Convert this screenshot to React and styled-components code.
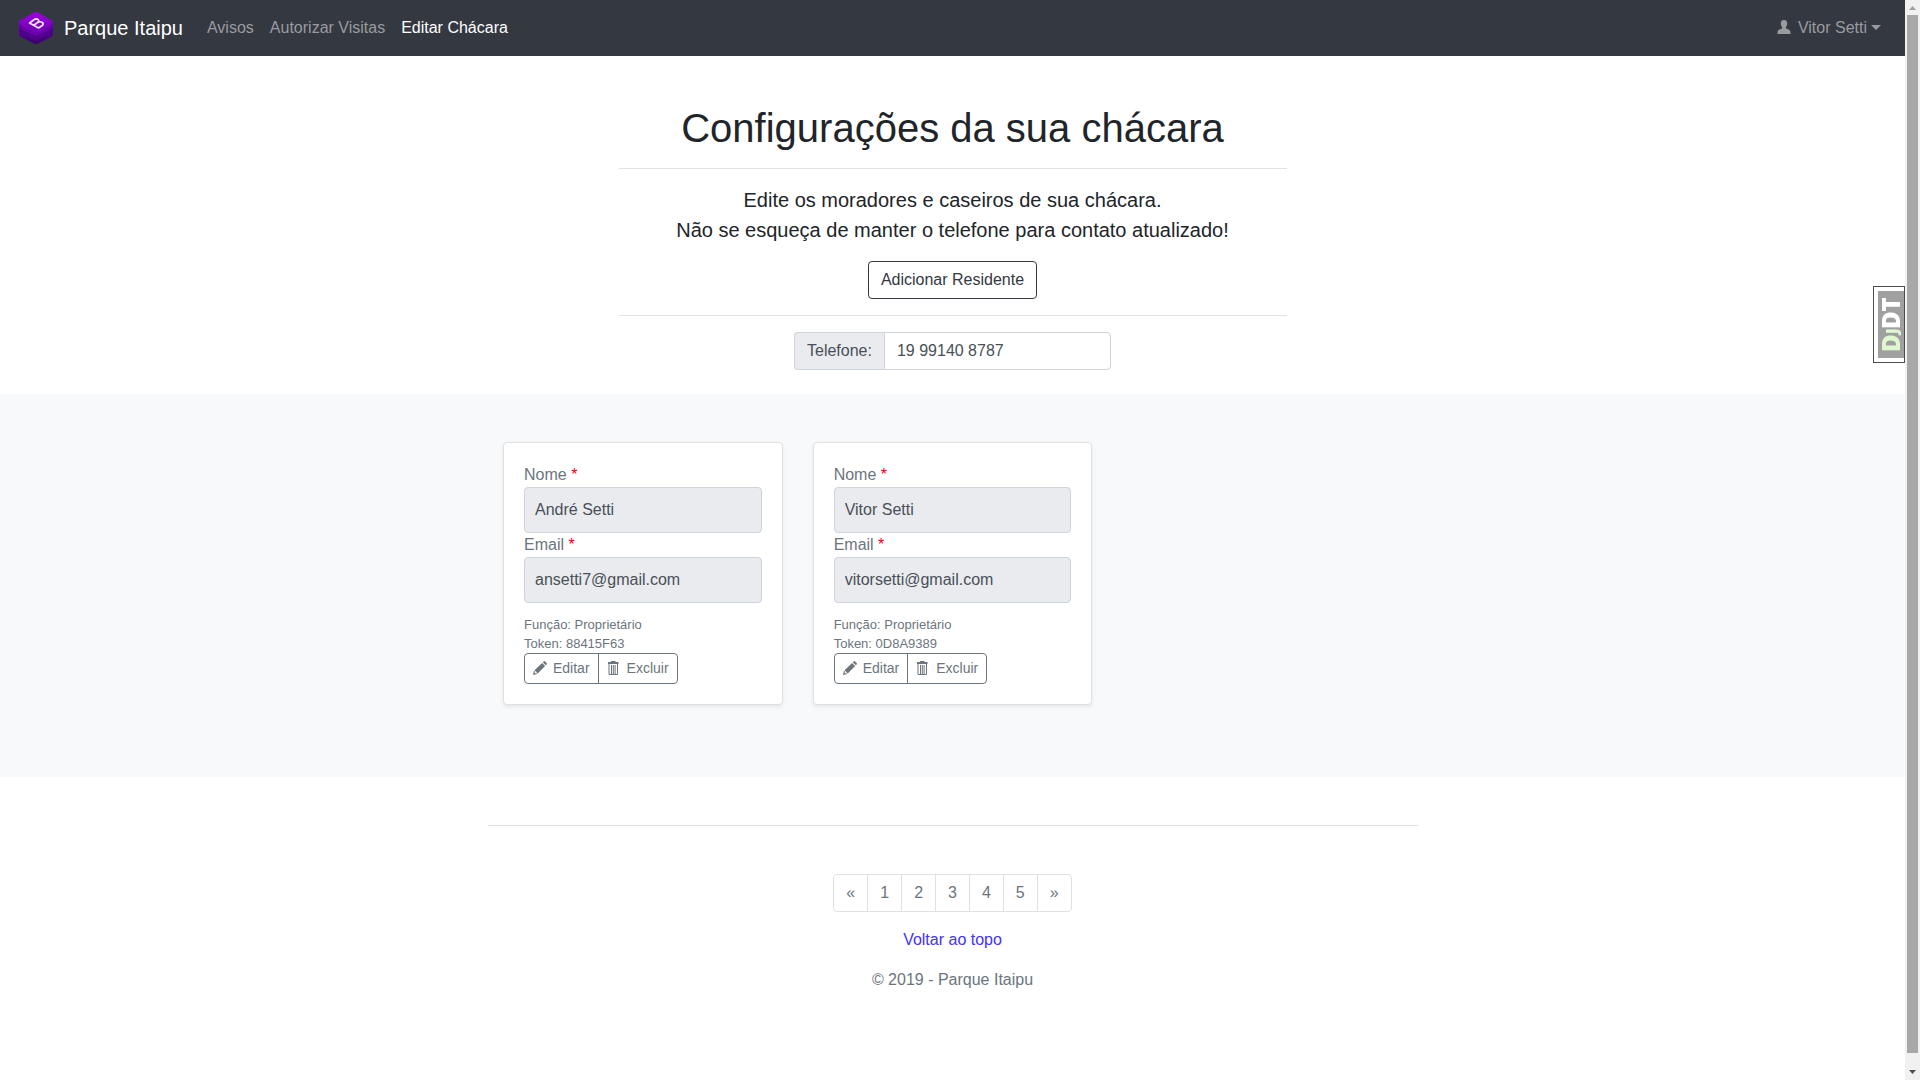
import React from "react";
import styled, { createGlobalStyle } from "styled-components";

const GlobalStyle = createGlobalStyle`
  *, *::before, *::after { box-sizing: border-box; }
  body {
    margin: 0;
    background: #fff;
    color: #212529;
    font-family: "Liberation Sans", Arial, sans-serif;
    font-size: 16px;
    line-height: 24px;
  }
  button, input { font: inherit; }
  p, h1, ul { margin: 0; padding: 0; }
  a { text-decoration: none; }
`;

const Shell = styled.div`
  display: flex;
  min-height: 100vh;
`;

const Page = styled.div`
  flex: 1;
  min-width: 0;
`;

const Navbar = styled.nav`
  display: flex;
  align-items: center;
  height: 56px;
  padding: 0 16px;
  background: #343841;
`;

const Brand = styled.a`
  display: flex;
  align-items: center;
  gap: 10px;
  margin-right: 16px;
  padding-left: 2px;
  color: #fff;
  font-size: 20px;
  line-height: 30px;
`;

const NavLink = styled.a`
  display: flex;
  align-items: center;
  padding: 8px;
  color: ${(p) => (p.$active ? "#fff" : "#999b9f")};
`;

const UserButton = styled.button`
  display: flex;
  align-items: center;
  margin-left: auto;
  padding: 8px;
  border: 0;
  background: none;
  color: #999b9f;
  line-height: 24px;
`;

const UserName = styled.span`
  margin: 0 4px 0 7px;
`;

const Caret = styled.span`
  margin-bottom: 2px;
  border-top: 5px solid currentColor;
  border-left: 5px solid transparent;
  border-right: 5px solid transparent;
`;

const Intro = styled.section`
  display: flex;
  flex-direction: column;
  align-items: center;
  max-width: 668px;
  margin: 0 auto;
  padding: 48px 0 24px;
  text-align: center;
`;

const Title = styled.h1`
  font-size: 40px;
  font-weight: 400;
  line-height: 48px;
`;

const Divider = styled.hr`
  width: 100%;
  margin: ${(p) => (p.$flush ? "0" : "16px 0")};
  border: 0;
  border-top: 1px solid #e1e2e3;
`;

const Lead = styled.p`
  margin-bottom: 16px;
  font-size: 20px;
  line-height: 30px;
`;

const AddButton = styled.button`
  padding: 6px 12px;
  border: 1px solid #343841;
  border-radius: 4px;
  background: #fff;
  color: #343841;
  line-height: 24px;
`;

const PhoneGroup = styled.div`
  display: flex;
  width: 317px;
`;

const PhoneLabel = styled.label`
  padding: 6px 12px;
  border: 1px solid #ced4da;
  border-right: 0;
  border-radius: 4px 0 0 4px;
  background: #e9ebef;
  color: #495057;
`;

const PhoneInput = styled.input`
  flex: 1;
  min-width: 0;
  height: 38px;
  padding: 6px 12px;
  border: 1px solid #ced4da;
  border-radius: 0 4px 4px 0;
  background: #fff;
  color: #495057;
`;

const Album = styled.main`
  padding: 48px 0 72px;
  background: #f8f9fb;
`;

const CardGrid = styled.div`
  display: grid;
  grid-template-columns: repeat(3, 1fr);
  gap: 30px;
  max-width: 899px;
  margin: 0 auto;
`;

const Card = styled.form`
  padding: 20px;
  border: 1px solid #dfe0e2;
  border-radius: 4px;
  background: #fff;
  box-shadow: 0 2px 4px rgba(0, 0, 0, 0.075);
  color: #6c757d;
`;

const FieldLabel = styled.label`
  display: block;
`;

const Required = styled.span`
  color: #e60012;
`;

const FieldInput = styled.input`
  display: block;
  width: 100%;
  height: 46px;
  padding: 0 10px;
  border: 1px solid #ced4da;
  border-radius: 4px;
  background: #e9ebef;
  color: #495057;
`;

const Details = styled.div`
  margin-top: 12px;
  font-size: 13px;
  line-height: 19px;
`;

const ButtonGroup = styled.div`
  display: inline-flex;
  border: 1px solid #6c757d;
  border-radius: 4px;
`;

const ActionButton = styled.button`
  display: flex;
  align-items: center;
  gap: 6px;
  height: 29px;
  padding: 0 8px 2px;
  border: 0;
  background: none;
  color: #6c757d;
  font-size: 14px;

  & + & {
    border-left: 1px solid #6c757d;
  }
`;

const Footer = styled.footer`
  display: flex;
  flex-direction: column;
  align-items: center;
  max-width: 930px;
  margin: 0 auto;
  padding: 48px 0;
  color: #6c757d;
`;

const Pagination = styled.ul`
  display: flex;
  margin: 48px 0 16px;
  border: 1px solid #dee2e6;
  border-radius: 4px;
  list-style: none;
`;

const PageItem = styled.li`
  & + & {
    border-left: 1px solid #dee2e6;
  }
`;

const PageLink = styled.a`
  display: block;
  padding: 6px 12px;
  color: #6c757d;
`;

const TopLink = styled.a`
  margin-bottom: 16px;
  color: #4232ff;
`;

const ScrollTrack = styled.div`
  position: sticky;
  top: 0;
  display: flex;
  flex-direction: column;
  align-items: center;
  width: 15px;
  height: 100vh;
  background: #f1f1f1;
`;

const ScrollArrow = styled.svg`
  width: 15px;
  height: 15px;
  flex: none;
`;

const ScrollThumb = styled.div`
  width: 11px;
  flex: 1;
  margin-bottom: 12px;
  background: #a8a8a8;
`;

const DebugHandle = styled.button`
  position: fixed;
  top: 286px;
  right: 15px;
  width: 32px;
  height: 77px;
  padding: 4px 0 4px 4px;
  border: 1px solid #4d4d4d;
  background: #fff;
`;

const DebugLabel = styled.span`
  display: flex;
  align-items: center;
  justify-content: center;
  height: 100%;
  background: #a0a0a0;
  color: #fff;
  font-family: "Open Sans", sans-serif;
  font-size: 24px;
  font-weight: 800;
  line-height: 26px;
  writing-mode: vertical-rl;
  transform: rotate(180deg);
`;

const DebugAccent = styled.span`
  color: #e0f8d0;
  font-size: ${(p) => (p.$small ? "16px" : "24px")};
`;

const Logo = () => (
  <svg width="36" height="36" viewBox="0 0 36 36" aria-hidden="true">
    <defs>
      <linearGradient id="top" x1="0" y1="0" x2="0" y2="1">
        <stop offset="0" stopColor="#9b00e0" />
        <stop offset="1" stopColor="#6f00b4" />
      </linearGradient>
      <linearGradient id="side" x1="0" y1="0" x2="0" y2="1">
        <stop offset="0" stopColor="#6d00b0" />
        <stop offset="1" stopColor="#36006a" />
      </linearGradient>
    </defs>
    <path d="M1 14v10q0 2 2 3l12 6q3 2 6 0l12-6q2-1 2-3V14z" fill="url(#side)" />
    <path d="M1 18v2q0 2 2 3l12 6q3 2 6 0l12-6q2-1 2-3v-2l-17 9z" fill="#51008e" />
    <path d="M1 12v4q0 2 2 3l12 6q3 2 6 0l12-6q2-1 2-3v-4z" fill="#6900aa" />
    <path d="M2.500 10 15 3q3-2 6 0l12 7q4 2 0 5l-12 7q-3 2-6 0L3 15q-4-3-.5-5z" fill="url(#top)" />
    <path d="M11.500 13 16 9.800q2.200-1.600 4-.3 1.700 1.300-.4 3 2.700-1.500 4.700 0 1.900 1.500-.4 3.200L20.500 18zM15.800 15.200l3.800-2.700" fill="none" stroke="#f4e6ff" strokeWidth="1.700" strokeLinejoin="round" />
  </svg>
);

const PersonIcon = () => (
  <svg width="14" height="16" viewBox="0 1 14 16" fill="currentColor" aria-hidden="true">
    <path d="M7 1C4.600 1 3.800 2.500 3.800 4.500c0 1.600.5 2.800 1.300 3.600v1.200C4.500 10 1 10.500.6 12.500L.4 15h13.200l-.2-2.500C13 10.500 9.500 10 8.900 9.300V8.100c.8-.8 1.300-2 1.300-3.600C10.200 2.500 9.400 1 7 1z" />
  </svg>
);

const PencilIcon = () => (
  <svg width="14" height="14" viewBox="0 0 14 14" fill="currentColor" aria-hidden="true">
    <path d="M9.800 1.200 12.800 4.200 13.800 3.200Q14.200 2.700 13.800 2.200L11.800.2Q11.300-.2 10.800.2zM9.100 1.900 1.500 9.200 4.800 12.500 12.100 4.900zM.9 9.800 0 14 4.200 13.100 3.200 12 2 12.400 1.600 12 2 10.800z" />
  </svg>
);

const TrashIcon = () => (
  <svg width="14" height="14" viewBox="1 0 14 14" fill="none" stroke="currentColor" aria-hidden="true">
    <path d="M2 2.500h10.500M2 1.500h10.500M5 .5h4.500M3 3v10.500h8.500V3M5.500 4v9M7.300 4v9M9.100 4v9" />
  </svg>
);

const residents = [
  { id: "88415F63", name: "André Setti", email: "ansetti7@gmail.com", role: "Proprietário" },
  { id: "0D8A9389", name: "Vitor Setti", email: "vitorsetti@gmail.com", role: "Proprietário" },
];

const pages = ["«", "1", "2", "3", "4", "5", "»"];

function ResidentCard({ resident }) {
  const nameId = `name-${resident.id}`;
  const emailId = `email-${resident.id}`;
  return (
    <Card>
      <FieldLabel htmlFor={nameId}>Nome <Required>*</Required></FieldLabel>
      <FieldInput id={nameId} defaultValue={resident.name} readOnly />
      <FieldLabel htmlFor={emailId}>Email <Required>*</Required></FieldLabel>
      <FieldInput id={emailId} type="email" defaultValue={resident.email} readOnly />
      <Details>
        <p>Função: {resident.role}</p>
        <p>Token: {resident.id}</p>
      </Details>
      <ButtonGroup>
        <ActionButton type="button"><PencilIcon />Editar</ActionButton>
        <ActionButton type="button"><TrashIcon />Excluir</ActionButton>
      </ButtonGroup>
    </Card>
  );
}

export default function App() {
  return (
    <>
      <GlobalStyle />
      <Shell>
        <Page id="topo">
          <Navbar>
            <Brand href="#"><Logo />Parque Itaipu</Brand>
            <NavLink href="#">Avisos</NavLink>
            <NavLink href="#">Autorizar Visitas</NavLink>
            <NavLink href="#" $active>Editar Chácara</NavLink>
            <UserButton type="button">
              <PersonIcon />
              <UserName>Vitor Setti</UserName>
              <Caret />
            </UserButton>
          </Navbar>
          <Intro>
            <Title>Configurações da sua chácara</Title>
            <Divider />
            <Lead>
              Edite os moradores e caseiros de sua chácara.
              <br />
              Não se esqueça de manter o telefone para contato atualizado!
            </Lead>
            <AddButton type="button">Adicionar Residente</AddButton>
            <Divider />
            <PhoneGroup>
              <PhoneLabel htmlFor="phone">Telefone:</PhoneLabel>
              <PhoneInput id="phone" type="tel" defaultValue="19 99140 8787" />
            </PhoneGroup>
          </Intro>
          <Album>
            <CardGrid>
              {residents.map((r) => <ResidentCard key={r.id} resident={r} />)}
            </CardGrid>
          </Album>
          <Footer>
            <Divider $flush />
            <Pagination>
              {pages.map((p) => (
                <PageItem key={p}><PageLink href="#">{p}</PageLink></PageItem>
              ))}
            </Pagination>
            <TopLink href="#topo">Voltar ao topo</TopLink>
            <p>© 2019 - Parque Itaipu</p>
          </Footer>
        </Page>
        <ScrollTrack aria-hidden="true">
          <ScrollArrow viewBox="0 0 15 15"><path d="M4 10h7L7.500 6z" fill="#a0a0a0" /></ScrollArrow>
          <ScrollThumb />
          <ScrollArrow viewBox="0 0 15 15"><path d="M4 5h7L7.500 9z" fill="#505050" /></ScrollArrow>
        </ScrollTrack>
      </Shell>
      <DebugHandle type="button">
        <DebugLabel>
          <DebugAccent>D</DebugAccent>
          <DebugAccent $small>J</DebugAccent>
          DT
        </DebugLabel>
      </DebugHandle>
    </>
  );
}
